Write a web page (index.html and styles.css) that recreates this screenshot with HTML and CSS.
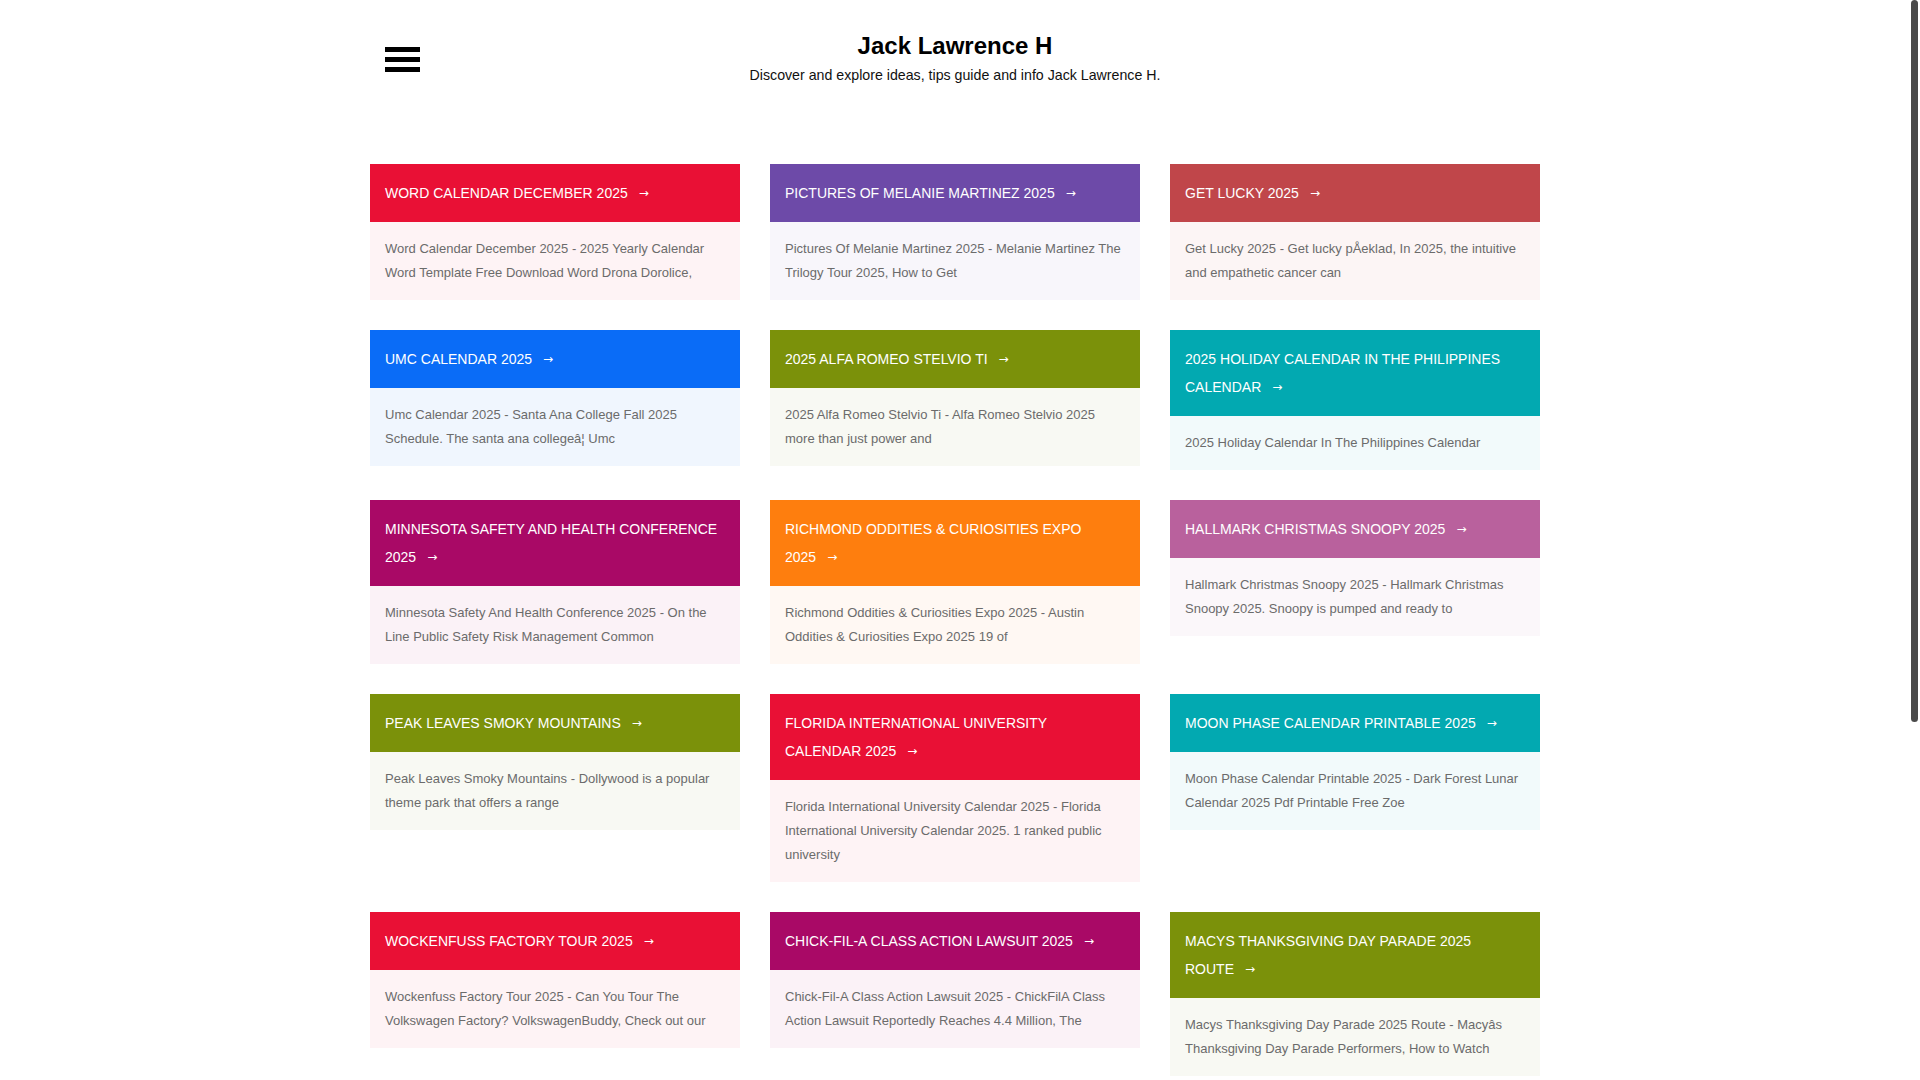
FILE: index.html
```html
<!DOCTYPE html>
<html lang="en">
<head>
<meta charset="utf-8">
<title>Jack Lawrence H</title>
<link rel="stylesheet" href="styles.css">
</head>
<body>
<div class="scroll-thumb" aria-hidden="true"></div>
<div class="page">
  <header class="site-header">
    <div class="menu-col">
      <button class="hamburger" aria-label="Menu"><span></span><span></span><span></span></button>
    </div>
    <div class="brand">
      <h1 class="site-title">Jack Lawrence H</h1>
      <p class="site-desc">Discover and explore ideas, tips guide and info Jack Lawrence H.</p>
    </div>
    <div class="menu-col"></div>
  </header>

  <main class="grid">
    <article class="card red">
      <h2 class="card-head">WORD CALENDAR DECEMBER <span class="tail">2025<span class="arrow">→</span></span></h2>
      <p class="card-body">Word Calendar December 2025 - 2025 Yearly Calendar Word Template Free Download Word Drona Dorolice,</p>
    </article>
    <article class="card purple">
      <h2 class="card-head">PICTURES OF MELANIE MARTINEZ <span class="tail">2025<span class="arrow">→</span></span></h2>
      <p class="card-body">Pictures Of Melanie Martinez 2025 - Melanie Martinez The Trilogy Tour 2025, How to Get</p>
    </article>
    <article class="card brick">
      <h2 class="card-head">GET LUCKY <span class="tail">2025<span class="arrow">→</span></span></h2>
      <p class="card-body">Get Lucky 2025 - Get lucky pÅeklad, In 2025, the <span class="tail">intuitive</span> and empathetic cancer can</p>
    </article>

    <article class="card blue">
      <h2 class="card-head">UMC CALENDAR <span class="tail">2025<span class="arrow">→</span></span></h2>
      <p class="card-body">Umc Calendar 2025 - Santa Ana College Fall 2025 Schedule. The santa ana collegeâ¦ Umc</p>
    </article>
    <article class="card olive">
      <h2 class="card-head">2025 ALFA ROMEO STELVIO <span class="tail">TI<span class="arrow">→</span></span></h2>
      <p class="card-body">2025 Alfa Romeo Stelvio Ti - Alfa Romeo Stelvio 2025 more than just power and</p>
    </article>
    <article class="card teal">
      <h2 class="card-head">2025 HOLIDAY CALENDAR IN THE PHILIPPINES <span class="tail">CALENDAR<span class="arrow">→</span></span></h2>
      <p class="card-body">2025 Holiday Calendar In The Philippines Calendar</p>
    </article>

    <article class="card magenta">
      <h2 class="card-head">MINNESOTA SAFETY AND HEALTH CONFERENCE <span class="tail">2025<span class="arrow">→</span></span></h2>
      <p class="card-body">Minnesota Safety And Health Conference 2025 - On the Line Public Safety Risk Management Common</p>
    </article>
    <article class="card orange">
      <h2 class="card-head">RICHMOND ODDITIES &amp; CURIOSITIES EXPO <span class="tail">2025<span class="arrow">→</span></span></h2>
      <p class="card-body">Richmond Oddities &amp; Curiosities Expo 2025 - Austin Oddities &amp; Curiosities Expo 2025 19 of</p>
    </article>
    <article class="card pink">
      <h2 class="card-head">HALLMARK CHRISTMAS SNOOPY <span class="tail">2025<span class="arrow">→</span></span></h2>
      <p class="card-body">Hallmark Christmas Snoopy 2025 - Hallmark Christmas Snoopy 2025. Snoopy is pumped and ready to</p>
    </article>

    <article class="card olive">
      <h2 class="card-head">PEAK LEAVES SMOKY <span class="tail">MOUNTAINS<span class="arrow">→</span></span></h2>
      <p class="card-body">Peak Leaves Smoky Mountains - Dollywood is a popular theme park that offers a range</p>
    </article>
    <article class="card red">
      <h2 class="card-head">FLORIDA INTERNATIONAL UNIVERSITY CALENDAR <span class="tail">2025<span class="arrow">→</span></span></h2>
      <p class="card-body">Florida International University Calendar 2025 - Florida International University Calendar 2025. 1 ranked public university</p>
    </article>
    <article class="card teal">
      <h2 class="card-head">MOON PHASE CALENDAR PRINTABLE <span class="tail">2025<span class="arrow">→</span></span></h2>
      <p class="card-body">Moon Phase Calendar Printable 2025 - Dark Forest Lunar Calendar 2025 Pdf Printable Free Zoe</p>
    </article>

    <article class="card red">
      <h2 class="card-head">WOCKENFUSS FACTORY TOUR <span class="tail">2025<span class="arrow">→</span></span></h2>
      <p class="card-body">Wockenfuss Factory Tour 2025 - Can You Tour The Volkswagen Factory? VolkswagenBuddy, Check out our</p>
    </article>
    <article class="card magenta">
      <h2 class="card-head">CHICK-FIL-A CLASS ACTION LAWSUIT <span class="tail">2025<span class="arrow">→</span></span></h2>
      <p class="card-body">Chick-Fil-A Class Action Lawsuit 2025 - ChickFilA Class Action Lawsuit Reportedly Reaches 4.4 Million, The</p>
    </article>
    <article class="card olive">
      <h2 class="card-head">MACYS THANKSGIVING DAY PARADE 2025 <span class="tail">ROUTE<span class="arrow">→</span></span></h2>
      <p class="card-body">Macys Thanksgiving Day Parade 2025 Route - Macyâs Thanksgiving Day Parade Performers, How to Watch</p>
    </article>
  </main>
</div>
</body>
</html>
```

FILE: styles.css
```css
* { box-sizing: border-box; }

html { background: #fff; }

body {
  margin: 0;
  font-family: "Liberation Sans", Arial, sans-serif;
  color: #222;
  background: #fff;
}

.scroll-thumb {
  position: fixed;
  top: 0;
  right: 2px;
  width: 7px;
  height: 722px;
  background: #4a4a4a;
  border-radius: 4px;
}

.page {
  width: 1170px;
  margin-left: calc(50% - 590px);
  padding-bottom: 540px;
}

.site-header {
  display: grid;
  grid-template-columns: 1fr auto 1fr;
  padding-top: 31px;
  margin-bottom: 79px;
}

.hamburger {
  display: flex;
  flex-direction: column;
  gap: 5px;
  width: 35px;
  margin: 16px 0 0 15px;
  padding: 0;
  border: 0;
  background: none;
  cursor: pointer;
}
.hamburger span {
  display: block;
  height: 5px;
  background: #000;
}

.brand { text-align: center; }

.site-title {
  margin: 0;
  font-size: 24px;
  line-height: 30px;
  font-weight: bold;
  color: #000;
}

.site-desc {
  margin: 4px 0 0;
  font-size: 14.2px;
  line-height: 20px;
  color: #111;
}

.grid {
  display: grid;
  grid-template-columns: repeat(3, 370px);
  column-gap: 30px;
  row-gap: 30px;
  align-items: start;
}

.card { background: var(--tint); }

.card-head {
  margin: 0;
  padding: 15px;
  background: var(--c);
  color: #fff;
  font-size: 14px;
  line-height: 28px;
  font-weight: normal;
}

.tail { white-space: nowrap; }

.arrow {
  display: inline-block;
  margin-left: 11px;
  font-size: 12px;
  font-family: "DejaVu Sans", sans-serif;
  vertical-align: 1px;
}

.card-body {
  margin: 0;
  padding: 15px;
  font-size: 13px;
  line-height: 24px;
  color: #6b6b6b;
}

.red     { --c: #e91035; --tint: #fef3f5; }
.purple  { --c: #6d4aa8; --tint: #f8f6fb; }
.brick   { --c: #c0464a; --tint: #fcf5f5; }
.blue    { --c: #0a6cf7; --tint: #f0f6fe; }
.olive   { --c: #7b910a; --tint: #f8f9f3; }
.teal    { --c: #02a9b1; --tint: #f2fafb; }
.magenta { --c: #a90966; --tint: #fbf2f7; }
.orange  { --c: #fe7e0e; --tint: #fff8f3; }
.pink    { --c: #b9619d; --tint: #fbf7fa; }
```
